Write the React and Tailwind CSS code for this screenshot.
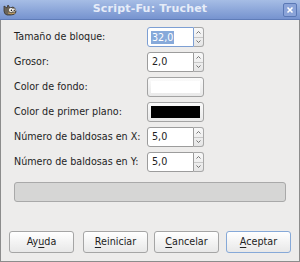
import React from 'react';

const font = { fontFamily: '"DejaVu Sans", "Liberation Sans", sans-serif' };

function Wilber() {
  return (
    <svg width="14" height="13" viewBox="0 0 14 13">
      <path d="M1 3 L4 5 L5 2 L7 5 L10 4 Q13 5 13 9 Q12 12 8 12 L4 12 Q1 11 1 8 Z" fill="#6b6458" stroke="#3a352e" strokeWidth="0.8" />
      <circle cx="8" cy="7" r="2" fill="#fff" />
      <circle cx="11" cy="7" r="1.6" fill="#fff" />
      <circle cx="8.4" cy="7.2" r="0.8" fill="#000" />
      <circle cx="11.2" cy="7.2" r="0.7" fill="#000" />
      <path d="M5 10 Q8 11.5 12 10" stroke="#c8a060" strokeWidth="1" fill="none" />
    </svg>
  );
}

function Spin({ value, focused }) {
  return (
    <div className="flex h-[20px] w-[57px]">
      <div
        className={`flex-1 flex items-center pl-[3px] bg-white rounded-l-[3px] border ${
          focused ? 'border-[#7d9fd3]' : 'border-[#9c9c9c]'
        }`}
      >
        {focused ? (
          <span className="bg-[#86a9da] text-white leading-[13px] px-[1px]">{value}</span>
        ) : (
          <span className="text-[#222] px-[1px]">{value}</span>
        )}
      </div>
      <div className="w-[10px] flex flex-col border border-l-0 border-[#a8a8a8] rounded-r-[3px] bg-gradient-to-b from-[#f8f8f8] to-[#e6e6e6]">
        <div className="flex-1 flex items-center justify-center border-b border-[#c8c8c8]">
          <svg width="5" height="3" viewBox="0 0 5 3"><path d="M0.5 2.5 L2.5 0.5 L4.5 2.5" stroke="#666" strokeWidth="0.9" fill="none" /></svg>
        </div>
        <div className="flex-1 flex items-center justify-center">
          <svg width="5" height="3" viewBox="0 0 5 3"><path d="M0.5 0.5 L2.5 2.5 L4.5 0.5" stroke="#666" strokeWidth="0.9" fill="none" /></svg>
        </div>
      </div>
    </div>
  );
}

function ColorBtn({ color }) {
  return (
    <div className="h-[20px] w-[57px] rounded-[3px] border border-[#a3a3a3] bg-gradient-to-b from-[#fbfbfb] to-[#e9e9e9] p-[3px]">
      <div className={`h-full w-full ${color === 'black' ? 'bg-black' : 'bg-white'}`} />
    </div>
  );
}

function Btn({ pre, u, post, focused }) {
  return (
    <div
      className={`h-[22px] w-[65px] flex items-center justify-center rounded-[3px] border bg-gradient-to-b from-[#ffffff] to-[#e8e8e8] text-[#222] ${
        focused ? 'border-[#86a9d8]' : 'border-[#a5a5a5]'
      }`}
    >
      <span>
        {pre}
        <span className="underline underline-offset-2">{u}</span>
        {post}
      </span>
    </div>
  );
}

const rows = [
  ['Tamaño de bloque:', <Spin value="32,0" focused />],
  ['Grosor:', <Spin value="2,0" />],
  ['Color de fondo:', <ColorBtn color="white" />],
  ['Color de primer plano:', <ColorBtn color="black" />],
  ['Número de baldosas en X:', <Spin value="5,0" />],
  ['Número de baldosas en Y:', <Spin value="5,0" />],
];

export default function App() {
  return (
    <div className="w-[300px] h-[262px] flex flex-col bg-[#edeceb] text-[9.6px]" style={font}>
      <div className="h-[20px] flex items-center justify-between px-[3px] bg-gradient-to-b from-[#a6bde5] to-[#7693cf] border-b border-[#5f7cb8]">
        <Wilber />
        <span className="text-[11px] font-bold text-[#e6ecf8] tracking-[0.2px]">Script-Fu: Truchet</span>
        <div className="w-[14px] h-[14px] rounded-[2px] border border-[#5a78b5] bg-[#8aa3d8] flex items-center justify-center">
          <svg width="8" height="8" viewBox="0 0 8 8">
            <path d="M1.5 1.5 L6.5 6.5 M6.5 1.5 L1.5 6.5" stroke="#fff" strokeWidth="1.6" />
          </svg>
        </div>
      </div>
      <div className="flex-1 flex flex-col border-x border-b border-[#8c8c8c] pl-[13px] pr-[13px] pt-[7px]">
        <div className="flex flex-col gap-[5px]">
          {rows.map(([label, ctrl], i) => (
            <div key={i} className="flex items-center h-[20px]">
              <div className="w-[133px] text-[#1e1e1e]">{label}</div>
              {ctrl}
            </div>
          ))}
        </div>
        <div className="mt-[10px] h-[20px] rounded-[3px] border border-[#a9a9a9] bg-[#d6d6d5]" />
        <div className="mt-[29px] flex items-center -ml-[5px] -mr-[5px]">
          <Btn pre="Ay" u="u" post="da" />
          <div className="ml-[9px]"><Btn pre="" u="R" post="einiciar" /></div>
          <div className="ml-auto flex gap-[7px]">
            <Btn pre="" u="C" post="ancelar" />
            <Btn pre="" u="A" post="ceptar" focused />
          </div>
        </div>
      </div>
    </div>
  );
}
